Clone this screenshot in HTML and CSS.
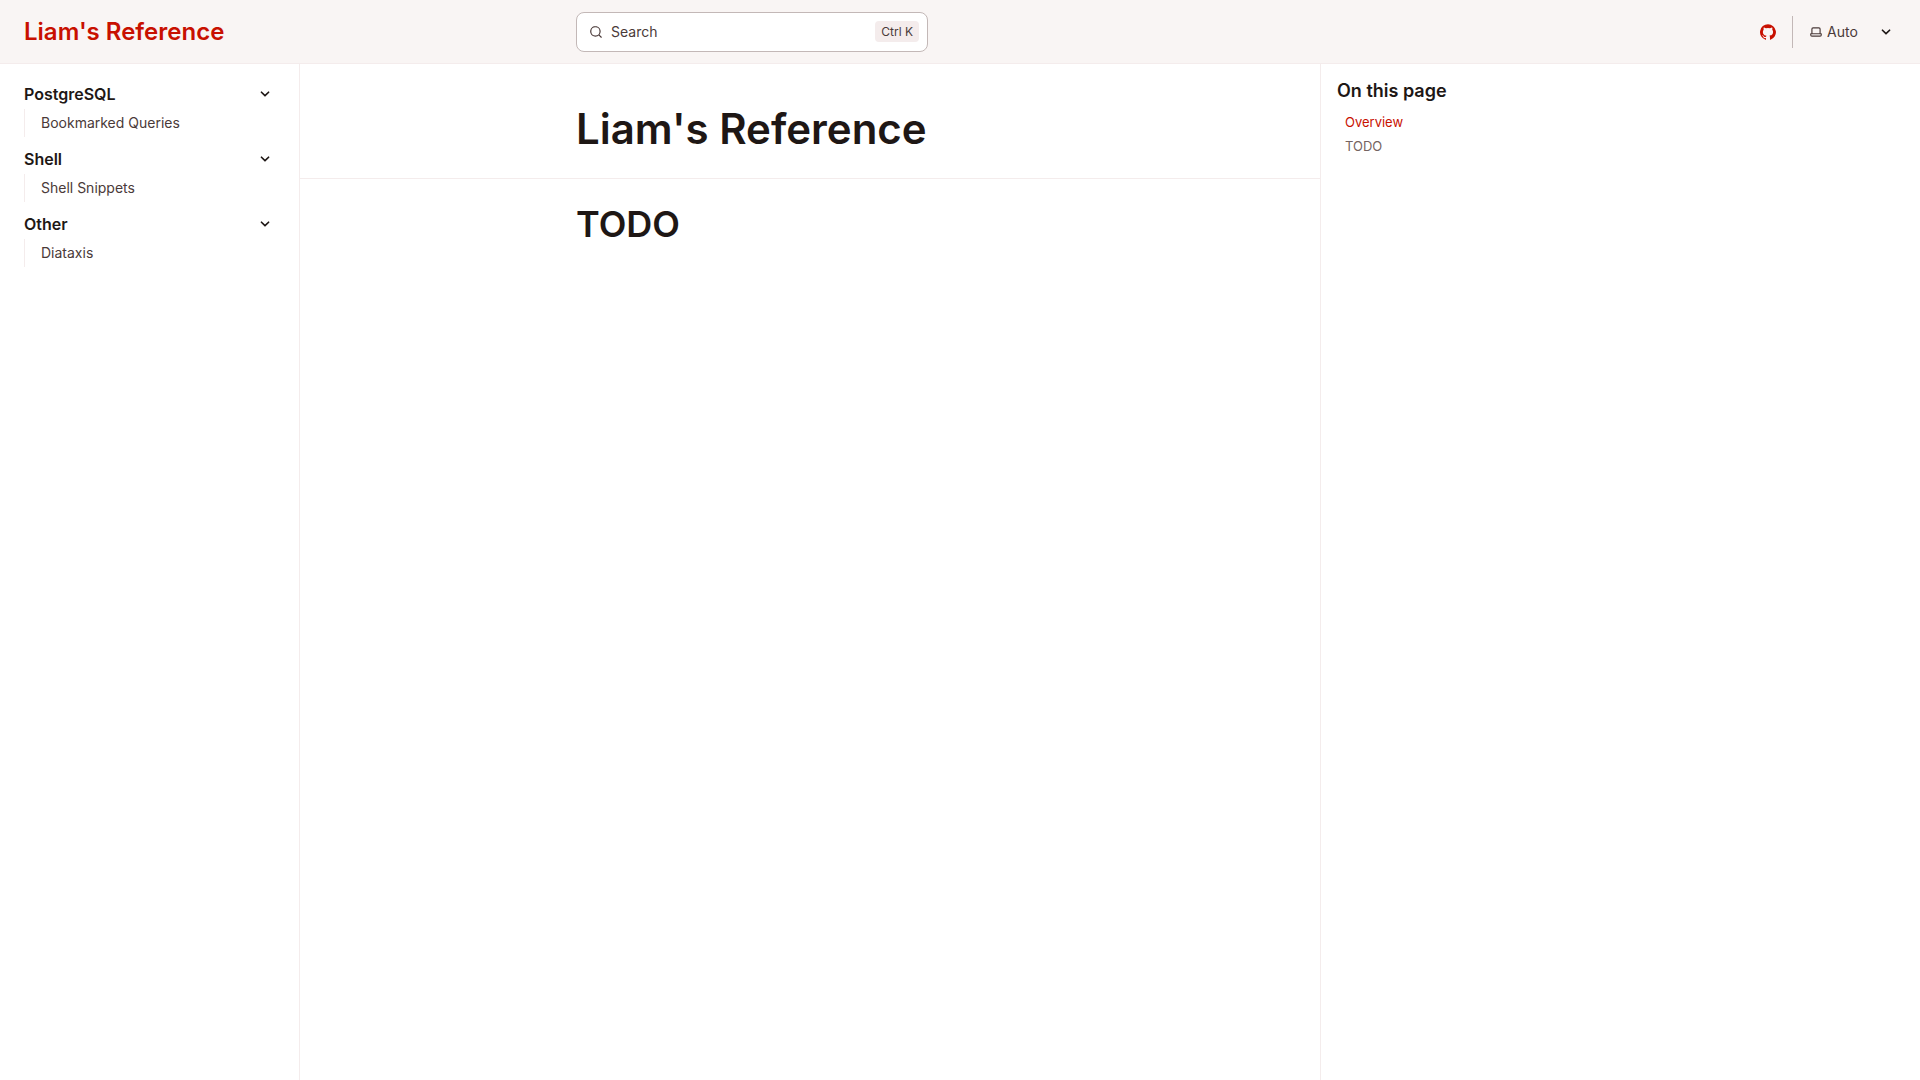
FILE: index.html
```html
<!DOCTYPE html>
<html lang="en">
<head>
<meta charset="utf-8">
<meta name="viewport" content="width=device-width, initial-scale=1">
<title>Liam's Reference</title>
<link rel="stylesheet" href="styles.css">
</head>
<body>
<svg class="defs" aria-hidden="true">
  <symbol id="caret" viewBox="0 0 24 24"><path d="M17 9.17a1 1 0 0 0-1.41 0L12 12.71 8.46 9.17a1 1 0 1 0-1.41 1.42l4.24 4.24a1.002 1.002 0 0 0 1.42 0L17 10.59a1.002 1.002 0 0 0 0-1.42Z"/></symbol>
</svg>
<header class="header">
  <div class="brand"><a class="site-title" href="#">Liam's Reference</a></div>
  <div class="search-area">
    <button class="search" type="button">
      <svg class="icon" viewBox="0 0 24 24" aria-hidden="true"><path d="M21.71 20.29 18 16.61A9 9 0 1 0 16.61 18l3.68 3.68a.999.999 0 0 0 1.42 0 1 1 0 0 0 0-1.39ZM11 18a7 7 0 1 1 0-14 7 7 0 0 1 0 14Z"/></svg>
      <span class="search-label">Search</span>
      <kbd class="shortcut">Ctrl K</kbd>
    </button>
  </div>
  <div class="tools">
    <a class="social" href="#" aria-label="GitHub">
      <svg class="icon-md" viewBox="0 0 24 24" aria-hidden="true"><path d="M12 .3a12 12 0 0 0-3.8 23.38c.6.12.83-.26.83-.57L9 21.07c-3.34.72-4.04-1.61-4.04-1.61-.55-1.39-1.34-1.76-1.34-1.76-1.08-.74.09-.73.09-.73 1.2.09 1.83 1.24 1.83 1.24 1.08 1.83 2.81 1.3 3.5 1 .1-.78.42-1.31.76-1.61-2.67-.3-5.47-1.33-5.47-5.93 0-1.31.47-2.38 1.24-3.22-.14-.3-.54-1.52.1-3.18 0 0 1-.32 3.3 1.23a11.5 11.5 0 0 1 6 0c2.28-1.55 3.29-1.23 3.29-1.23.64 1.66.24 2.88.12 3.18a4.65 4.65 0 0 1 1.23 3.22c0 4.61-2.8 5.63-5.48 5.92.42.36.81 1.1.81 2.22l-.01 3.29c0 .31.2.69.82.57A12 12 0 0 0 12 .3Z"/></svg>
    </a>
    <div class="theme">
      <svg class="icon theme-icon" viewBox="0 0 24 24" aria-hidden="true"><path d="M21 14h-1V7a3 3 0 0 0-3-3H7a3 3 0 0 0-3 3v7H3a1 1 0 0 0-1 1v2a3 3 0 0 0 3 3h14a3 3 0 0 0 3-3v-2a1 1 0 0 0-1-1ZM6 7a1 1 0 0 1 1-1h10a1 1 0 0 1 1 1v7H6V7Zm14 10a1 1 0 0 1-1 1H5a1 1 0 0 1-1-1v-1h16v1Z"/></svg>
      <select class="theme-select" aria-label="Select theme">
        <option>Dark</option>
        <option>Light</option>
        <option selected>Auto</option>
      </select>
      <svg class="caret theme-caret" aria-hidden="true"><use href="#caret"/></svg>
    </div>
  </div>
</header>
<div class="layout">
  <nav class="sidebar" aria-label="Main">
    <details class="group" open>
      <summary class="group-title">PostgreSQL<svg class="caret" aria-hidden="true"><use href="#caret"/></svg></summary>
      <ul class="group-list"><li><a class="nav-link" href="#">Bookmarked Queries</a></li></ul>
    </details>
    <details class="group" open>
      <summary class="group-title">Shell<svg class="caret" aria-hidden="true"><use href="#caret"/></svg></summary>
      <ul class="group-list"><li><a class="nav-link" href="#">Shell Snippets</a></li></ul>
    </details>
    <details class="group" open>
      <summary class="group-title">Other<svg class="caret" aria-hidden="true"><use href="#caret"/></svg></summary>
      <ul class="group-list"><li><a class="nav-link" href="#">Diataxis</a></li></ul>
    </details>
  </nav>
  <main class="main">
    <section class="panel"><div class="content"><h1 class="page-title">Liam's Reference</h1></div></section>
    <section class="panel"><div class="content"><h2 class="section-title" id="todo">TODO</h2></div></section>
  </main>
  <aside class="toc">
    <h2 class="toc-title">On this page</h2>
    <ul class="toc-list">
      <li><a class="toc-link current" href="#">Overview</a></li>
      <li><a class="toc-link" href="#todo">TODO</a></li>
    </ul>
  </aside>
</div>
</body>
</html>
```
FILE: styles.css
```css
:root {
  --accent: #c81000;
  --ink: #1e1715;
  --text: #4a3a39;
  --muted: #756361;
  --hairline: #f4ecec;
  --nav-bg: #f9f5f4;
  --line: #c3b8b7;
  --sidebar: 300px;
  --content: 720px;
  /* sidebar, then the content column and its contents list share the free space */
  --columns: var(--sidebar) minmax(0, 17fr) minmax(0, 10fr);
}

* { box-sizing: border-box; }

body {
  margin: 0;
  min-height: 100vh;
  display: flex;
  flex-direction: column;
  background: #fff;
  color: var(--text);
  font: 16px/28px Inter, "Liberation Sans", sans-serif;
}

h1, h2, ul { margin: 0; padding: 0; }
ul { list-style: none; }
a { text-decoration: none; }
svg { display: block; flex: none; fill: currentColor; }

.defs { display: none; }
.icon { width: 14px; height: 14px; }
.icon-md { width: 16px; height: 16px; }
.caret { width: 20px; height: 20px; }

.header {
  display: grid;
  grid-template-columns: var(--columns);
  align-items: center;
  height: 64px;
  background: var(--nav-bg);
  border-bottom: 1px solid var(--hairline);
}
.brand { padding-left: 24px; }
.site-title {
  display: block;
  color: var(--accent);
  font-size: 24px;
  font-weight: 600;
  white-space: nowrap;
}
.search-area {
  width: 100%;
  max-width: calc(var(--content) + 24px);
  margin-left: auto;
}
.search {
  display: flex;
  align-items: center;
  gap: 8px;
  width: 352px;
  max-width: 100%;
  height: 40px;
  padding: 0 8px 0 12px;
  border: 1px solid var(--line);
  border-radius: 8px;
  background: #fff;
  color: var(--text);
  font: inherit;
  font-size: 14px;
  cursor: pointer;
}
.shortcut {
  margin-left: auto;
  padding: 0 6px;
  border-radius: 4px;
  background: var(--hairline);
  font: 12px/21px Inter, "Liberation Sans", sans-serif;
}
.tools {
  display: flex;
  align-items: center;
  justify-content: flex-end;
  padding-right: 24px;
}
.social {
  display: flex;
  align-items: center;
  height: 32px;
  padding-right: 16px;
  border-right: 1px solid var(--line);
  color: var(--accent);
}
.theme {
  position: relative;
  margin-left: 16px;
}
.theme-icon,
.theme-caret {
  position: absolute;
  top: 0;
  bottom: 0;
  margin: auto 0;
  pointer-events: none;
}
.theme-icon { left: 0; }
.theme-caret { right: 0; color: var(--ink); }
.theme-select {
  display: block;
  width: 87px;
  padding: 0 20px 0 18px;
  border: 0;
  background: transparent;
  color: var(--text);
  font: inherit;
  font-size: 14px;
  appearance: none;
  cursor: pointer;
}

.layout {
  flex: 1;
  display: grid;
  grid-template-columns: var(--columns);
}
.sidebar {
  display: flex;
  flex-direction: column;
  gap: 8px;
  padding: 16px 24px;
  border-right: 1px solid var(--hairline);
}
.group-title {
  display: flex;
  align-items: center;
  justify-content: space-between;
  color: var(--ink);
  font-weight: 600;
  list-style: none;
  cursor: pointer;
}
.group-title::-webkit-details-marker { display: none; }
.group-list {
  margin-top: 1px;
  padding-left: 16px;
  border-left: 1px solid var(--hairline);
}
.nav-link {
  display: block;
  color: var(--text);
  font-size: 14px;
}

.panel { padding: 24px 24px 24px 0; }
.panel + .panel { border-top: 1px solid var(--hairline); }
.content {
  max-width: var(--content);
  margin-left: auto;
}
.page-title {
  margin-top: 16px;
  color: var(--ink);
  font-size: 42px;
  font-weight: 600;
  line-height: 50px;
}
.section-title {
  color: var(--ink);
  font-size: 36px;
  font-weight: 600;
  line-height: 43px;
}

.toc {
  padding: 16px;
  border-left: 1px solid var(--hairline);
}
.toc-title {
  margin-bottom: 8px;
  color: var(--ink);
  font-size: 18px;
  font-weight: 600;
  line-height: 22px;
}
.toc-link {
  display: block;
  padding: 0 8px;
  color: var(--muted);
  font-size: 13px;
  line-height: 24px;
}
.toc-link.current { color: var(--accent); }
```
